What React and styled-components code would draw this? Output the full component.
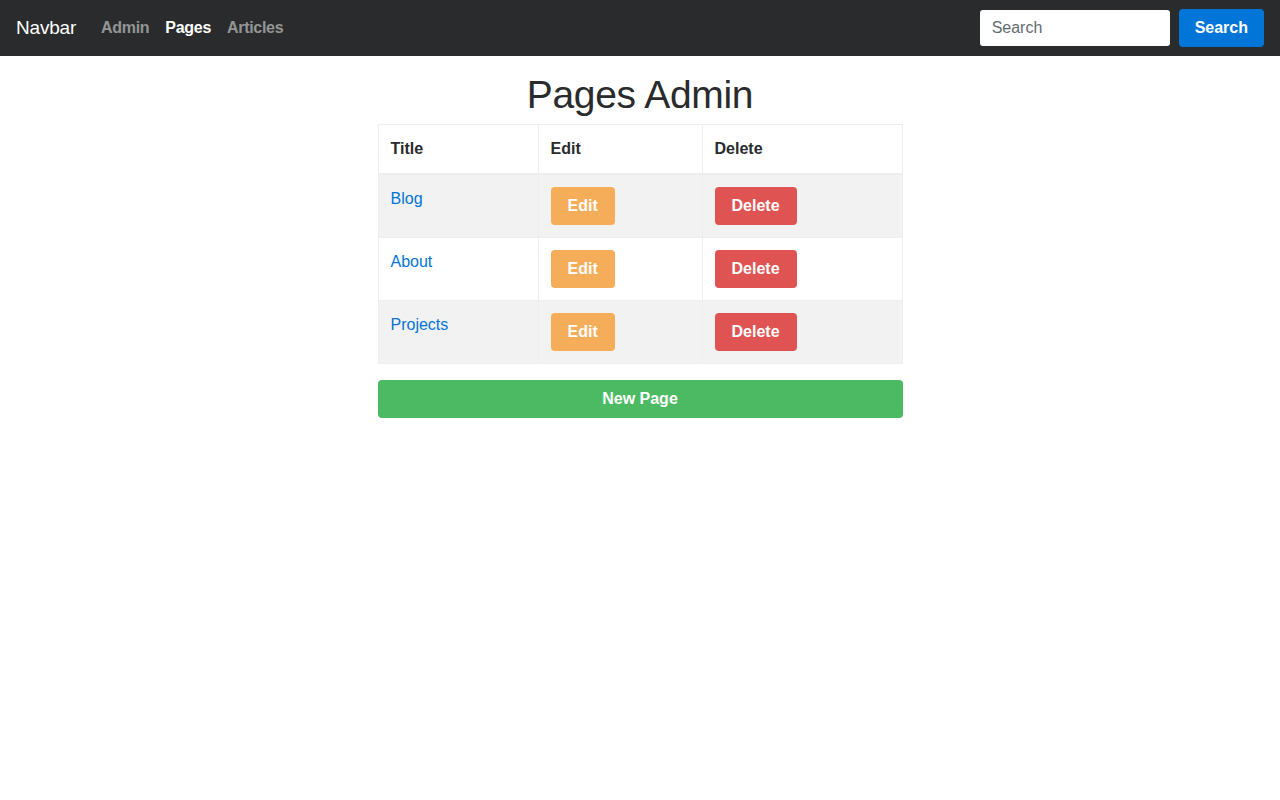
import React from 'react';
import styled, { createGlobalStyle } from 'styled-components';

const GlobalStyle = createGlobalStyle`
  * { box-sizing: border-box; }
  body {
    margin: 0;
    font-family: "Liberation Sans", Arial, sans-serif;
    font-size: 16px;
    line-height: 1.5;
    color: #292b2c;
    background: #fff;
  }
`;

const Nav = styled.nav`
  height: 56px;
  background: #292b2c;
  display: flex;
  align-items: center;
  padding: 0 16px;
`;

const Brand = styled.a`
  color: #fff;
  font-size: 19px;
  letter-spacing: -0.2px;
  margin-right: 25px;
  text-decoration: none;
`;

const NavLinks = styled.div`
  display: flex;
  gap: 16px;
  flex: 1;
`;

const NavLink = styled.a`
  color: ${p => (p.$active ? '#fff' : 'rgba(255,255,255,0.5)')};
  font-weight: bold;
  font-size: 16px;
  letter-spacing: -0.3px;
  text-decoration: none;
`;

const SearchForm = styled.form`
  display: flex;
  align-items: center;
  gap: 9px;
`;

const SearchInput = styled.input`
  width: 190px;
  height: 36px;
  border: none;
  border-radius: 3px;
  padding: 0 12px;
  font-family: inherit;
  font-size: 16px;
  color: #464a4c;
  &::placeholder { color: #636c72; }
`;

const Button = styled.button`
  border: none;
  border-radius: 4px;
  color: #fff;
  font-family: inherit;
  font-weight: bold;
  font-size: 16px;
  height: 38px;
  padding: 0 ${p => p.$pad || 16}px;
  background: ${p => p.$bg};
  width: ${p => (p.$block ? '100%' : 'auto')};
  cursor: pointer;
`;

const Main = styled.main`
  width: 525px;
  margin: 0 auto;
`;

const Heading = styled.h1`
  text-align: center;
  font-weight: normal;
  font-size: 39px;
  line-height: 1.1;
  margin: 18px 0 7px;
  letter-spacing: -0.3px;
`;

const Table = styled.table`
  width: 100%;
  border-collapse: collapse;
  margin-bottom: 16px;
`;

const Th = styled.th`
  text-align: left;
  padding: 12px;
  border: 1px solid #eceeef;
  border-bottom-width: 2px;
  font-weight: bold;
  width: ${p => p.$w};
`;

const Row = styled.tr`
  background: ${p => (p.$striped ? '#f2f2f2' : '#fff')};
`;

const Td = styled.td`
  padding: 12px;
  vertical-align: top;
  border: 1px solid #eceeef;
`;

const PageLink = styled.a`
  color: #0275d8;
  text-decoration: none;
`;

const pages = ['Blog', 'About', 'Projects'];

export default function App() {
  return (
    <>
      <GlobalStyle />
      <Nav>
        <Brand href="#">Navbar</Brand>
        <NavLinks>
          <NavLink href="#">Admin</NavLink>
          <NavLink href="#" $active>Pages</NavLink>
          <NavLink href="#">Articles</NavLink>
        </NavLinks>
        <SearchForm onSubmit={e => e.preventDefault()}>
          <SearchInput placeholder="Search" />
          <Button $bg="#0275d8">Search</Button>
        </SearchForm>
      </Nav>
      <Main>
        <Heading>Pages Admin</Heading>
        <Table>
          <thead>
            <tr>
              <Th $w="160px">Title</Th>
              <Th $w="164px">Edit</Th>
              <Th>Delete</Th>
            </tr>
          </thead>
          <tbody>
            {pages.map((p, i) => (
              <Row key={p} $striped={i % 2 === 0}>
                <Td><PageLink href="#">{p}</PageLink></Td>
                <Td><Button $bg="#f5ad59" $pad={17}>Edit</Button></Td>
                <Td><Button $bg="#e05353" $pad={17}>Delete</Button></Td>
              </Row>
            ))}
          </tbody>
        </Table>
        <Button $bg="#4bba62" $block>New Page</Button>
      </Main>
    </>
  );
}
